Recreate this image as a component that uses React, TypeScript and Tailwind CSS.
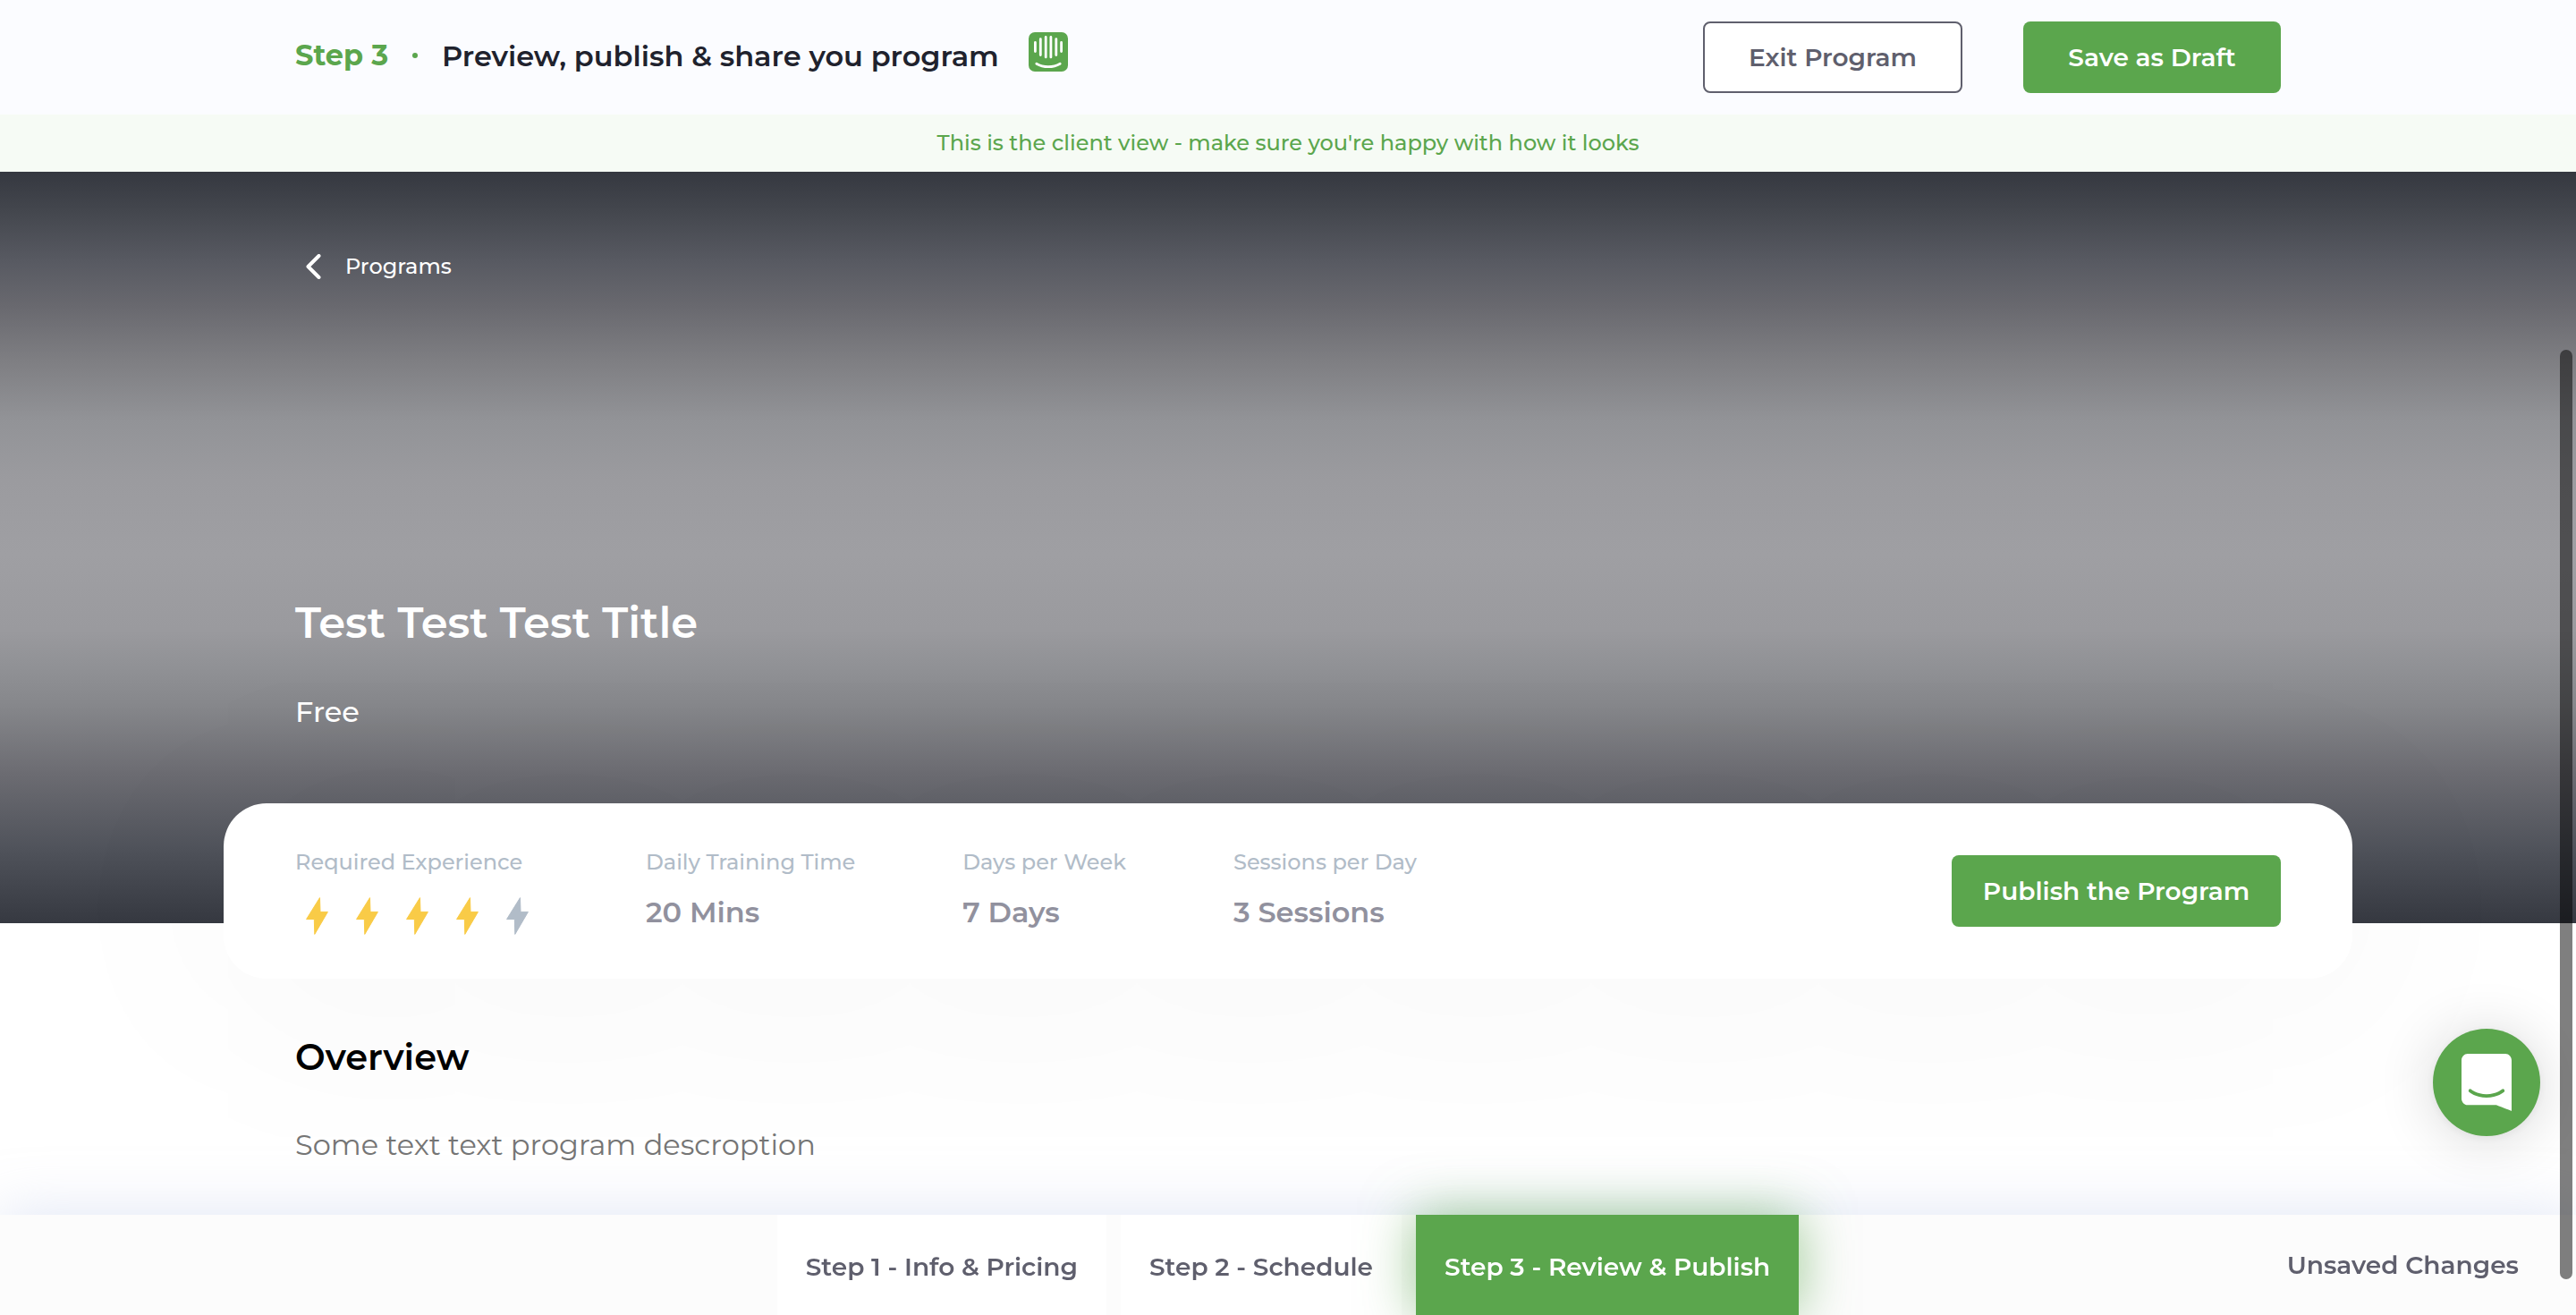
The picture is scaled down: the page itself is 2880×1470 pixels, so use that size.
import type { ReactNode } from "react";

function Container({ className, children }: { className: string; children: ReactNode }) {
  return <div className={`mx-auto w-full max-w-[2380px] px-20 ${className}`}>{children}</div>;
}

function HelpIcon() {
  return (
    <svg viewBox="0 0 44 44" className="size-11" fill="none" strokeLinecap="round" aria-hidden="true">
      <rect width="44" height="44" rx="7" fill="#5ba64d" />
      <path
        stroke="#fff"
        strokeWidth="2.8"
        d="M7.4 11.4v10.2M13.3 7.6v18M19.2 5.4v22.5M24.9 5.4v22.5M30.8 7.6v18M36.6 11.4v10.2"
      />
      <path stroke="#fff" strokeWidth="2.8" d="M8.8 35.2c4 2.4 8.2 3.5 13.2 3.5s9.2-1.1 13.2-3.5" />
    </svg>
  );
}

function Bolt({ active }: { active: boolean }) {
  return (
    <span className="flex size-12 items-center justify-center">
      <svg
        viewBox="0 0 25 42"
        className={active ? "h-[42px] w-[25px] text-[#f9cb47]" : "h-[42px] w-[25px] text-[#b1bcc8]"}
        fill="currentColor"
        stroke="currentColor"
        strokeWidth="1"
        strokeLinejoin="round"
        aria-hidden="true"
      >
        <path d="M15.5 .6 16 16.4h8.4L9.8 41.4 9.3 24.5H.6z" />
      </svg>
    </span>
  );
}

function Stat({ label, children }: { label: string; children: ReactNode }) {
  return (
    <div className="flex flex-col gap-5">
      <dt className="text-2xl/8 font-medium whitespace-nowrap text-[#b1bcc8]">{label}</dt>
      <dd className="h-[46px] text-[32px]/10 font-semibold whitespace-nowrap text-[#91919e]">{children}</dd>
    </div>
  );
}

const stats = [
  { label: "Daily Training Time", value: "20 Mins" },
  { label: "Days per Week", value: "7 Days" },
  { label: "Sessions per Day", value: "3 Sessions" },
];

export default function App() {
  return (
    <div className="min-h-screen bg-white pb-28 font-['Montserrat',Inter,sans-serif]">
      <header className="bg-[#fbfcff]">
        <Container className="flex h-32 items-center justify-between">
          <div className="flex items-center pb-1 text-[32px]/10">
            <span className="font-bold text-[#5ba64d]">Step 3</span>
            <span className="mx-[27px] size-[6px] rounded-full bg-[#5ba64d]" />
            <h1 className="pt-[2px] font-semibold text-[#20222d]">Preview, publish &amp; share you program</h1>
            <button type="button" aria-label="Help" className="mb-2 ml-[33px]">
              <HelpIcon />
            </button>
          </div>
          <div className="flex gap-17">
            <button
              type="button"
              className="h-20 w-[290px] rounded-lg border-2 border-[#5f5f6d] bg-white text-[28px]/9 font-semibold text-[#5f5f6d]"
            >
              Exit Program
            </button>
            <button type="button" className="h-20 w-72 rounded-lg bg-[#5ba64d] text-[28px]/9 font-semibold text-white">
              Save as Draft
            </button>
          </div>
        </Container>
      </header>

      <p className="flex h-16 items-center justify-center bg-[#f6fbf5] text-2xl/8 font-medium text-[#5ba64d]">
        This is the client view - make sure you're happy with how it looks
      </p>

      <section className="flex h-[840px] bg-[linear-gradient(#353840_0%,#43464d_5%,#585a62_12%,#69696f_18%,#7e7e82_25%,#929397_33%,#9b9b9f_41%,#9f9fa3_51%,#9a9a9e_61%,#909195_66%,#86878b_71%,#6c6c72_80%,#50535b_90%,#363941_100%)] text-white">
        <Container className="flex flex-col justify-between pt-[88px] pb-[216px]">
          <a href="#programs" className="flex items-center gap-[27px] self-start pl-3 text-2xl/9 font-medium">
            <svg viewBox="0 0 17 28" className="h-7 w-[17px]" fill="none" aria-hidden="true">
              <path
                d="M14.5 2 2.5 14l12 12"
                stroke="currentColor"
                strokeWidth="4"
                strokeLinecap="round"
                strokeLinejoin="round"
              />
            </svg>
            Programs
          </a>
          <div className="flex flex-col gap-[50px]">
            <h2 className="text-[48px]/[60px] font-semibold">Test Test Test Title</h2>
            <p className="text-[32px]/10 font-medium">Free</p>
          </div>
        </Container>
      </section>

      <main>
        <Container className="relative -mt-[134px] flex items-center justify-between rounded-[48px] bg-white py-12 shadow-[0_20px_280px_20px_rgba(0,0,0,0.04)]">
          <dl className="flex gap-[120px] pt-[2px]">
            <Stat label="Required Experience">
              <span role="img" aria-label="4 out of 5" className="flex gap-2">
                {[1, 2, 3, 4, 5].map((n) => (
                  <Bolt key={n} active={n <= 4} />
                ))}
              </span>
            </Stat>
            {stats.map((s) => (
              <Stat key={s.label} label={s.label}>
                {s.value}
              </Stat>
            ))}
          </dl>
          <button type="button" className="h-20 w-[368px] rounded-lg bg-[#5ba64d] text-[28px]/9 font-semibold text-white">
            Publish the Program
          </button>
        </Container>

        <Container className="relative flex flex-col gap-[50px] pt-[60px]">
          <h2 className="text-[40px]/14 font-semibold text-black">Overview</h2>
          <p className="text-[32px]/10 text-[#757575]">Some text text program descroption</p>
        </Container>
      </main>

      <nav className="fixed inset-x-0 bottom-0 grid h-28 grid-cols-[1fr_auto_1fr] bg-[#fcfcfc] text-[28px]/9 font-semibold text-[#5f5f6d] shadow-[0_0_64px_rgba(191,203,235,0.5)]">
        <div className="col-start-2 flex gap-4">
          <button type="button" className="bg-white px-8 pt-1">
            Step 1 - Info &amp; Pricing
          </button>
          <button type="button" className="bg-white px-8 pt-1">
            Step 2 - Schedule
          </button>
          <button
            type="button"
            aria-current="step"
            className="bg-[#5ba64d] px-8 pt-1 text-white shadow-[0_0_60px_rgba(91,166,77,0.6)]"
          >
            Step 3 - Review &amp; Publish
          </button>
        </div>
        <span className="self-center justify-self-end pr-16">Unsaved Changes</span>
      </nav>

      <button
        type="button"
        aria-label="Open chat"
        className="fixed right-10 bottom-50 flex size-30 items-center justify-center rounded-full bg-[#5ba64d] shadow-[0_2px_12px_rgba(0,0,0,0.06),0_4px_64px_rgba(0,0,0,0.16)]"
      >
        <svg viewBox="0 0 28 32" className="h-16 w-14" fill="#fff" aria-hidden="true">
          <path d="M28 32s-4.714-1.855-8.527-3.34H3.437C1.54 28.66 0 27.026 0 25.013V3.644C0 1.633 1.54 0 3.437 0h21.125c1.898 0 3.437 1.632 3.437 3.645v18.404H28V32zm-4.139-11.982a.88.88 0 00-1.292-.105c-.03.026-3.015 2.681-8.57 2.681-5.486 0-8.517-2.636-8.571-2.684a.88.88 0 00-1.29.107 1.01 1.01 0 00-.219.708.992.992 0 00.318.664c.142.128 3.537 3.15 9.762 3.15 6.226 0 9.621-3.022 9.763-3.15a.992.992 0 00.317-.664 1.01 1.01 0 00-.218-.707z" />
        </svg>
      </button>

      <div aria-hidden="true" className="fixed top-[391px] right-1 bottom-10 w-[14px] rounded-full bg-black/50" />
    </div>
  );
}
